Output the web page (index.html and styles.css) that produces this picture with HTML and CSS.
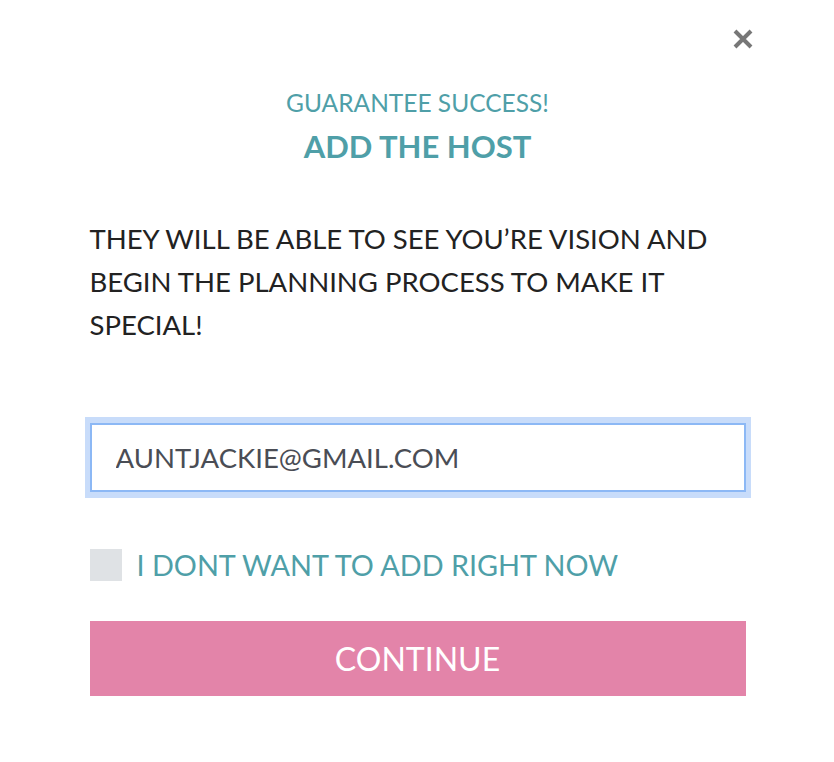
FILE: index.html
```html
<!DOCTYPE html>
<html lang="en">
<head>
    <meta charset="UTF-8">
    <meta name="viewport" content="width=device-width, initial-scale=1.0">
    <link rel="stylesheet" href="styles.css">
    <title>Add The Host</title>
</head>
<body>
    <div class="modal">
        <div class="modal-top">
            <button class="close-button" type="button" aria-label="Close">
                <svg width="20" height="20" viewBox="0 0 20 20">
                    <path d="M2 2 L18 18 M18 2 L2 18" stroke="#777" stroke-width="4" fill="none"/>
                </svg>
            </button>
        </div>

        <p class="kicker">GUARANTEE SUCCESS!</p>
        <h1>ADD THE HOST</h1>

        <p class="intro">THEY WILL BE ABLE TO SEE YOU’RE VISION AND BEGIN THE PLANNING PROCESS TO MAKE IT SPECIAL!</p>

        <form id="hostForm">
            <div class="email-wrap">
                <input type="email" id="host_email" name="host_email" value="AUNTJACKIE@GMAIL.COM">
            </div>

            <label class="skip">
                <span class="box"></span>
                I DONT WANT TO ADD RIGHT NOW
            </label>

            <button class="continue-button" type="button">CONTINUE</button>
        </form>
    </div>
</body>
</html>
```

FILE: styles.css
```css
body {
    margin: 0;
    background: #fff;
    font-family: Lato, "Open Sans", sans-serif;
}

.modal {
    width: 656px;
    margin: 0 auto;
    padding-top: 29px;
    padding-left: 1px;
}

.modal-top {
    display: flex;
    justify-content: flex-end;
    margin-right: -7px;
}

.close-button {
    background: none;
    border: none;
    padding: 0;
    width: 20px;
    height: 20px;
    cursor: pointer;
}

.kicker {
    margin: 41px 0 0;
    text-align: center;
    color: #4f9fa8;
    font-size: 24.5px;
    line-height: 26px;
}

h1 {
    margin: 12px 0 0;
    text-align: center;
    color: #4f9fa8;
    font-size: 31px;
    line-height: 36px;
}

.intro {
    margin: 53px 0 0;
    color: #222;
    font-size: 27.5px;
    line-height: 43px;
}

form {
    margin-top: 71px;
}

.email-wrap {
    margin: 0 -5px;
    padding: 6px 5px;
    background: #c8dcfa;
}

input {
    box-sizing: border-box;
    display: block;
    width: 100%;
    height: 69px;
    padding: 0 24px;
    border: 2px solid #8cb8f5;
    background: #fff;
    color: #4a4d55;
    font-family: inherit;
    font-size: 27.5px;
    outline: none;
}

.skip {
    display: flex;
    align-items: center;
    gap: 15px;
    height: 32px;
    margin-top: 51px;
    color: #4f9fa8;
    font-size: 28.8px;
    cursor: pointer;
}

.box {
    flex: none;
    width: 32px;
    height: 32px;
    background: #dfe2e5;
}

.continue-button {
    display: block;
    width: 100%;
    height: 75px;
    margin-top: 40px;
    border: none;
    background: #e384a9;
    color: white;
    font-family: inherit;
    font-size: 32px;
    cursor: pointer;
}
```
